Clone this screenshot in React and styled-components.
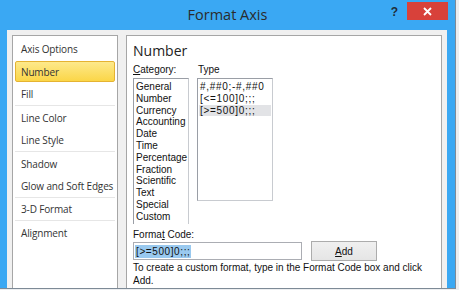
import React from "react";
import styled, { createGlobalStyle } from "styled-components";

const Global = createGlobalStyle`
  html, body { margin: 0; padding: 0; background: #eceef0; }
  body { width: 459px; height: 290px; overflow: hidden; }
`;

const Window = styled.div`
  width: 456px;
  height: 289px;
  background: #3aa8f3;
  display: flex;
  flex-direction: column;
  box-sizing: border-box;
  border-right: 1px solid #7d8a96;
  border-bottom: 1px solid #7d8a96;
`;

const TitleBar = styled.div`
  height: 30px;
  flex: none;
  display: grid;
  grid-template-columns: 1fr auto 1fr;
  align-items: start;
`;

const Title = styled.div`
  grid-column: 2;
  font-family: "Open Sans", "Noto Sans", sans-serif;
  font-size: 14.5px;
  color: #2b2b2b;
  line-height: 30px;
`;

const Controls = styled.div`
  grid-column: 3;
  justify-self: end;
  display: flex;
  align-items: flex-start;
  gap: 9px;
  padding-top: 2px;
  padding-right: 7px;
`;

const Help = styled.span`
  font-family: "Liberation Sans", Arial, sans-serif;
  font-weight: bold;
  font-size: 12px;
  color: #1f2d3a;
  line-height: 20px;
`;

const Close = styled.div`
  width: 41px;
  height: 18px;
  background: #d8413a;
  display: flex;
  align-items: center;
  justify-content: center;
`;

const Body = styled.div`
  flex: 1;
  margin: 0 8px 0 7px;
  background: #f0f0f0;
  display: flex;
  gap: 8px;
  padding: 5px 5px 0 5px;
  min-height: 0;
`;

const SidePanel = styled.div`
  width: 106px;
  flex: none;
  box-sizing: border-box;
  background: #fff;
  border: 1px solid #a6a6a6;
  border-bottom: none;
  padding: 1px 2px;
  display: flex;
  flex-direction: column;
`;

const NavItem = styled.div`
  height: ${(p) => (p.$selected ? "21px" : "23px")};
  box-sizing: border-box;
  display: flex;
  align-items: center;
  white-space: nowrap;
  padding-left: ${(p) => (p.$selected ? "5px" : "6px")};
  font-family: "Open Sans", "Noto Sans", sans-serif;
  font-size: 10px;
  color: #333;
  letter-spacing: -0.15px;
  border-bottom: ${(p) => (p.$sep ? "1px solid #e6e6e6" : "none")};
  ${(p) =>
    p.$selected &&
    `
    margin: 1px 0;
    border: 1px solid #e5b332;
    border-radius: 2px;
    background: linear-gradient(#fde98b, #fbd648);
  `}
`;

const MainPanel = styled.div`
  flex: 1;
  box-sizing: border-box;
  background: #fff;
  border: 1px solid #a6a6a6;
  border-bottom: none;
  padding: 6px 0 0 6px;
  display: flex;
  flex-direction: column;
`;

const Heading = styled.div`
  font-family: "Open Sans", "Noto Sans", sans-serif;
  font-size: 14px;
  color: #222;
  line-height: 18px;
  margin-bottom: 3px;
`;

const Columns = styled.div`
  display: flex;
  gap: 8px;
  align-items: flex-start;
`;

const Column = styled.div`
  display: flex;
  flex-direction: column;
`;

const Label = styled.div`
  font-family: "Liberation Sans", Arial, sans-serif;
  font-size: 10px;
  color: #111;
  line-height: 13px;
  padding-left: ${(p) => p.$indent || 0}px;
  margin-bottom: ${(p) => (p.$tight ? 0 : 2)}px;
  u { text-decoration: underline; }
`;

const ListBox = styled.div`
  width: ${(p) => p.$w}px;
  height: ${(p) => p.$h}px;
  box-sizing: border-box;
  border: 1px solid #9a9ea6;
  border-right-color: #c8cbd0;
  border-bottom: ${(p) => (p.$open ? "none" : "1px solid #c8cbd0")};
  padding: 2px 1px;
  display: flex;
  flex-direction: column;
  background: #fff;
`;

const ListItem = styled.div`
  font-family: "Liberation Sans", Arial, sans-serif;
  font-size: 10px;
  color: #111;
  line-height: 11.8px;
  padding-left: 1px;
  white-space: nowrap;
  letter-spacing: ${(p) => (p.$code ? "0.7px" : "0")};
  background: ${(p) => (p.$selected ? "#e2e3e6" : "transparent")};
`;

const CodeSection = styled.div`
  display: flex;
  flex-direction: column;
  margin-top: 4px;
`;

const CodeRow = styled.div`
  display: flex;
  align-items: center;
  gap: 9px;
`;

const Input = styled.div`
  width: 169px;
  height: 18px;
  box-sizing: border-box;
  border: 1px solid #abadb3;
  padding: 1px 1px;
  display: flex;
  align-items: center;
`;

const Selected = styled.span`
  font-family: "Liberation Sans", Arial, sans-serif;
  font-size: 10px;
  letter-spacing: 0.6px;
  background: #99c9ef;
  color: #111;
  line-height: 13px;
  padding: 0 1px;
`;

const Button = styled.div`
  width: 66px;
  height: 20px;
  box-sizing: border-box;
  border: 1px solid #acacac;
  background: linear-gradient(#f0f0f0, #e5e5e5);
  display: flex;
  align-items: center;
  justify-content: center;
  font-family: "Liberation Sans", Arial, sans-serif;
  font-size: 10px;
  color: #111;
`;

const Hint = styled.div`
  font-family: "Liberation Sans", Arial, sans-serif;
  font-size: 10px;
  color: #111;
  line-height: 13px;
  margin-top: 0;
  width: 292px;
`;

const navItems = [
  { t: "Axis Options" },
  { t: "Number", selected: true },
  { t: "Fill", sep: true },
  { t: "Line Color" },
  { t: "Line Style", sep: true },
  { t: "Shadow" },
  { t: "Glow and Soft Edges", sep: true },
  { t: "3-D Format", sep: true },
  { t: "Alignment" },
];

const categories = [
  "General", "Number", "Currency", "Accounting", "Date", "Time",
  "Percentage", "Fraction", "Scientific", "Text", "Special", "Custom",
];

const types = ["#,##0;-#,##0", "[<=100]0;;;", "[>=500]0;;;"];

export default function App() {
  return (
    <>
      <Global />
      <Window>
        <TitleBar>
          <Title>Format Axis</Title>
          <Controls>
            <Help>?</Help>
            <Close>
              <svg width="9" height="9" viewBox="0 0 9 9">
                <path d="M1 1 L8 8 M8 1 L1 8" stroke="#fff" strokeWidth="1.8" />
              </svg>
            </Close>
          </Controls>
        </TitleBar>
        <Body>
          <SidePanel>
            {navItems.map((n) => (
              <NavItem key={n.t} $selected={n.selected} $sep={n.sep}>
                {n.t}
              </NavItem>
            ))}
          </SidePanel>
          <MainPanel>
            <Heading>Number</Heading>
            <Columns>
              <Column>
                <Label>
                  <u>C</u>ategory:
                </Label>
                <ListBox $w={56} $h={146} $open>
                  {categories.map((c) => (
                    <ListItem key={c}>{c}</ListItem>
                  ))}
                </ListBox>
              </Column>
              <Column>
                <Label $indent={1}>Type</Label>
                <ListBox $w={76} $h={123}>
                  {types.map((t, i) => (
                    <ListItem key={t} $code $selected={i === 2}>
                      {t}
                    </ListItem>
                  ))}
                </ListBox>
              </Column>
            </Columns>
            <CodeSection>
              <Label $tight>
                Forma<u>t</u> Code:
              </Label>
              <CodeRow>
                <Input>
                  <Selected>[&gt;=500]0;;;</Selected>
                </Input>
                <Button>
                  <span>
                    <u>A</u>dd
                  </span>
                </Button>
              </CodeRow>
              <Hint>
                To create a custom format, type in the Format Code box and click Add.
              </Hint>
            </CodeSection>
          </MainPanel>
        </Body>
      </Window>
    </>
  );
}
